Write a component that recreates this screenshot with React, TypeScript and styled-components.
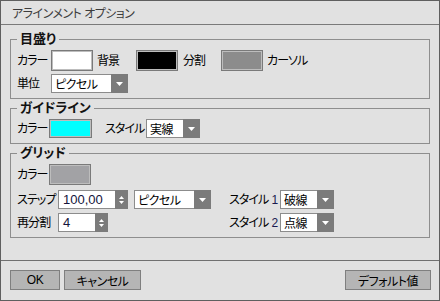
import React from "react";
import styled, { createGlobalStyle } from "styled-components";

const Global = createGlobalStyle`
  html, body { margin: 0; padding: 0; background: #e1e1e1; }
  * { box-sizing: border-box; }
  body {
    font-family: "Liberation Sans", "Noto Sans CJK JP", sans-serif;
    font-size: 12px;
    color: #000;
    font-feature-settings: "palt";
    letter-spacing: -0.5px;
  }
`;

const Window = styled.div`
  width: 440px;
  height: 301px;
  border: 1px solid #5f5f5f;
  background: #e1e1e1;
  display: flex;
  flex-direction: column;
`;

const TitleBar = styled.div`
  height: 24px;
  flex: none;
  border-bottom: 1px solid #7a7a7a;
  padding: 0 0 0 11px;
  display: flex;
  align-items: center;
  font-size: 12px;
  color: #3c3c3c;
`;

const Content = styled.div`
  flex: 1;
  padding: 7px 9px 0 9px;
  display: flex;
  flex-direction: column;
`;

const Group = styled.fieldset<{ $first?: boolean }>`
  margin: ${(p) => (p.$first ? "0" : "2px")} 0 0 0;
  padding: 4px 6px 5px 6px;
  border: 1px solid #8e8e8e;
  min-width: 0;
`;

const Legend = styled.legend`
  padding: 0 3px;
  margin: 0;
  font-size: 13px;
  line-height: 14px;
  font-weight: bold;
  color: #111;
  letter-spacing: 0;
`;

const Row = styled.div<{ $mt?: number }>`
  display: flex;
  align-items: center;
  margin-top: ${(p) => p.$mt ?? 0}px;
`;

const Label = styled.span<{ $w?: number; $ml?: number }>`
  display: inline-block;
  width: ${(p) => (p.$w ? `${p.$w}px` : "auto")};
  margin-left: ${(p) => p.$ml ?? 0}px;
  white-space: nowrap;
  line-height: 14px;
  letter-spacing: -0.9px;
  flex: none;
`;

const Swatch = styled.div<{ $color: string; $w?: number; $h?: number }>`
  width: ${(p) => p.$w ?? 42}px;
  height: ${(p) => p.$h ?? 21}px;
  background: ${(p) => p.$color};
  border: 1px solid #7a7a7a;
  box-shadow: inset 0 0 0 1px #bdbdbd;
  flex: none;
`;

const SelectBox = styled.div<{ $w: number; $ml?: number }>`
  width: ${(p) => p.$w}px;
  height: 19px;
  margin-left: ${(p) => p.$ml ?? 0}px;
  display: flex;
  align-items: stretch;
  background: #fff;
  border: 1px solid #8c8c8c;
  flex: none;
`;

const Value = styled.div<{ $num?: boolean }>`
  flex: 1;
  display: flex;
  align-items: center;
  padding-left: ${(p) => (p.$num ? 4 : 3)}px;
  font-size: ${(p) => (p.$num ? 13 : 12)}px;
  letter-spacing: ${(p) => (p.$num ? "0" : "-0.5px")};
  color: ${(p) => (p.$num ? "#14143c" : "#000")};
  white-space: nowrap;
  overflow: hidden;
`;

const ArrowBox = styled.div<{ $w?: number }>`
  width: ${(p) => p.$w ?? 17}px;
  margin: -1px -1px -1px 0;
  background: #7b7b7b;
  display: flex;
  align-items: center;
  justify-content: center;
`;

const SpinBox = styled.div`
  width: 13px;
  margin: -1px -1px -1px 0;
  background: #7b7b7b;
  display: flex;
  flex-direction: column;
  align-items: center;
  justify-content: center;
  gap: 2px;
`;

const Grid = styled.div`
  display: grid;
  grid-template-columns: 212px auto;
  row-gap: 4px;
  margin-top: 5px;
`;

const Cell = styled.div`
  display: flex;
  align-items: center;
`;

const Num = styled.span`
  color: #1a1a50;
  letter-spacing: 0;
  margin-left: 3px;
`;

const Footer = styled.div`
  flex: none;
  height: 40px;
  border-top: 1px solid #707070;
  padding: 9px 8px 0 9px;
  display: flex;
  align-items: flex-start;
  gap: 4px;
`;

const Button = styled.button<{ $w: number; $push?: boolean }>`
  width: ${(p) => p.$w}px;
  height: 20px;
  margin: 0 0 0 ${(p) => (p.$push ? "auto" : "0")};
  padding: 0;
  background: #b5b5b5;
  border: 1px solid #7f7f7f;
  font-family: inherit;
  font-size: 12px;
  letter-spacing: -0.5px;
  color: #000;
  font-feature-settings: "palt";
`;

const Down = () => (
  <svg width="7" height="4" viewBox="0 0 7 4">
    <path d="M0 0H7L3.5 4Z" fill="#fff" />
  </svg>
);

const Select = ({ w, value, ml }: { w: number; value: string; ml?: number }) => (
  <SelectBox $w={w} $ml={ml}>
    <Value>{value}</Value>
    <ArrowBox>
      <Down />
    </ArrowBox>
  </SelectBox>
);

const Spinner = ({ w, value }: { w: number; value: string }) => (
  <SelectBox $w={w}>
    <Value $num>{value}</Value>
    <SpinBox>
      <svg width="5" height="3" viewBox="0 0 5 3">
        <path d="M0 3H5L2.5 0Z" fill="#fff" />
      </svg>
      <svg width="5" height="3" viewBox="0 0 5 3">
        <path d="M0 0H5L2.5 3Z" fill="#fff" />
      </svg>
    </SpinBox>
  </SelectBox>
);

export default function App() {
  return (
    <>
      <Global />
      <Window>
        <TitleBar>アラインメント オプション</TitleBar>
        <Content>
          <Group $first>
            <Legend>目盛り</Legend>
            <Row>
              <Label $w={34}>カラー</Label>
              <Swatch $color="#ffffff" />
              <Label $w={39} $ml={4}>背景</Label>
              <Swatch $color="#000000" />
              <Label $w={38} $ml={5}>分割</Label>
              <Swatch $color="#8c8c8c" />
              <Label $ml={4}>カーソル</Label>
            </Row>
            <Row $mt={3}>
              <Label $w={34}>単位</Label>
              <Select w={77} value="ピクセル" />
            </Row>
          </Group>
          <Group>
            <Legend>ガイドライン</Legend>
            <Row>
              <Label $w={32}>カラー</Label>
              <Swatch $color="#00ffff" $w={43} $h={19} />
              <Label $w={41} $ml={13}>スタイル</Label>
              <Select w={54} value="実線" />
            </Row>
          </Group>
          <Group>
            <Legend>グリッド</Legend>
            <Row>
              <Label $w={32}>カラー</Label>
              <Swatch $color="#a2a2a5" />
            </Row>
            <Grid>
              <Cell>
                <Label $w={41}>ステップ</Label>
                <Spinner w={70} value="100,00" />
                <Select w={77} value="ピクセル" ml={6} />
              </Cell>
              <Cell>
                <Label $w={51}>
                  スタイル<Num>1</Num>
                </Label>
                <Select w={54} value="破線" />
              </Cell>
              <Cell>
                <Label $w={41}>再分割</Label>
                <Spinner w={50} value="4" />
              </Cell>
              <Cell>
                <Label $w={51}>
                  スタイル<Num>2</Num>
                </Label>
                <Select w={54} value="点線" />
              </Cell>
            </Grid>
          </Group>
        </Content>
        <Footer>
          <Button $w={50}>OK</Button>
          <Button $w={77}>キャンセル</Button>
          <Button $w={86} $push>デフォルト値</Button>
        </Footer>
      </Window>
    </>
  );
}
